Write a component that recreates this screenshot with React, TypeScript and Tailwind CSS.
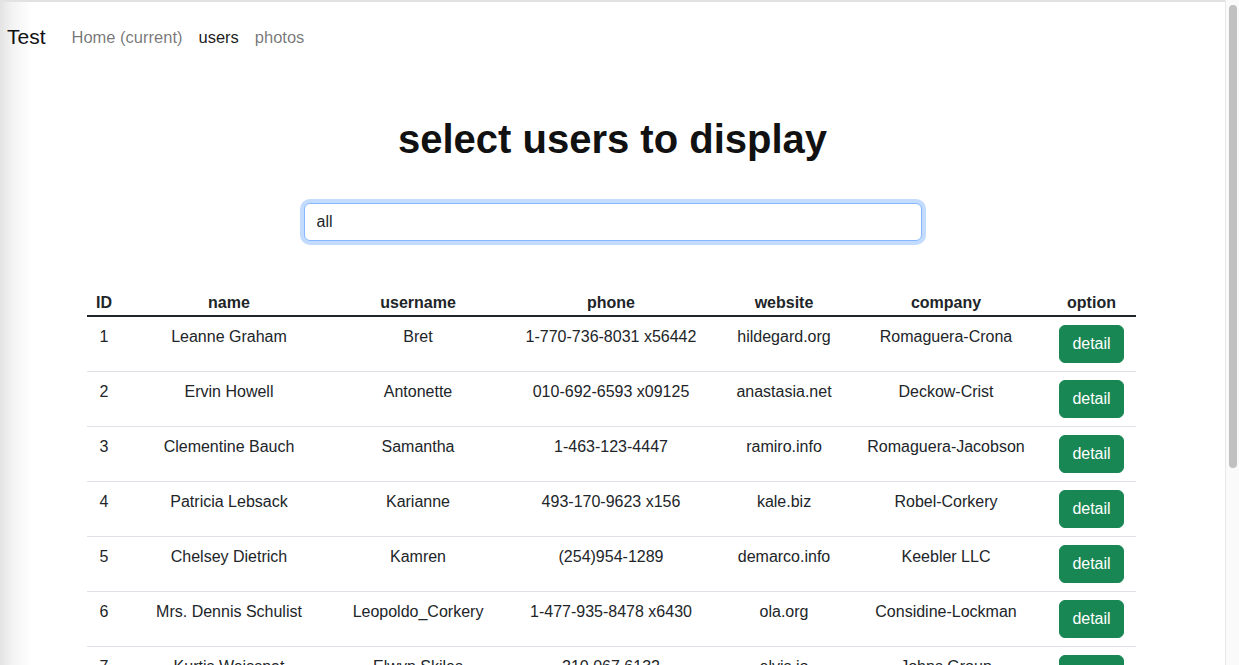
import React from "react";

type User = {
  id: number;
  name: string;
  username: string;
  phone: string;
  website: string;
  company: string;
};

const users: User[] = [
  { id: 1, name: "Leanne Graham", username: "Bret", phone: "1-770-736-8031 x56442", website: "hildegard.org", company: "Romaguera-Crona" },
  { id: 2, name: "Ervin Howell", username: "Antonette", phone: "010-692-6593 x09125", website: "anastasia.net", company: "Deckow-Crist" },
  { id: 3, name: "Clementine Bauch", username: "Samantha", phone: "1-463-123-4447", website: "ramiro.info", company: "Romaguera-Jacobson" },
  { id: 4, name: "Patricia Lebsack", username: "Karianne", phone: "493-170-9623 x156", website: "kale.biz", company: "Robel-Corkery" },
  { id: 5, name: "Chelsey Dietrich", username: "Kamren", phone: "(254)954-1289", website: "demarco.info", company: "Keebler LLC" },
  { id: 6, name: "Mrs. Dennis Schulist", username: "Leopoldo_Corkery", phone: "1-477-935-8478 x6430", website: "ola.org", company: "Considine-Lockman" },
  { id: 7, name: "Kurtis Weissnat", username: "Elwyn.Skiles", phone: "210.067.6132", website: "elvis.io", company: "Johns Group" },
  { id: 8, name: "Nicholas Runolfsdottir V", username: "Maxime_Nienow", phone: "586.493.6943 x140", website: "jacynthe.com", company: "Abernathy Group" },
  { id: 9, name: "Glenna Reichert", username: "Delphine", phone: "(775)976-6794 x41206", website: "conrad.com", company: "Yost and Sons" },
  { id: 10, name: "Clementina DuBuque", username: "Moriah.Stanton", phone: "024-648-3804", website: "ambrose.net", company: "Hoeger LLC" },
];

export default function App() {
  return (
    <div className="flex h-screen w-full overflow-hidden bg-white font-['Liberation_Sans',Arial,sans-serif] text-[#212529]">
      <div className="flex min-w-0 flex-1 flex-col border-t-2 border-[#e2e2e2] bg-[linear-gradient(to_right,#e3e3e3_0px,#f3f3f3_12px,#ffffff_32px)]">
        {/* navbar */}
        <nav className="flex h-[70px] shrink-0 items-center pl-[7px]">
          <span className="mr-[18px] text-[21px] leading-[30px] text-[#111]">Test</span>
          <a className="px-2 text-[16.5px] leading-6 text-[rgba(0,0,0,0.55)]">Home (current)</a>
          <a className="px-2 text-[16.5px] leading-6 text-[rgba(0,0,0,0.9)]">users</a>
          <a className="px-2 text-[16.5px] leading-6 text-[rgba(0,0,0,0.55)]">photos</a>
        </nav>

        <h1 className="mt-[43px] text-center text-[40px] font-bold leading-[48px] text-[#111]">select users to display</h1>

        <div className="mt-[40px] flex justify-center">
          <input
            readOnly
            value="all"
            className="h-[38px] w-[618px] rounded-[6px] border border-[#86b7fe] bg-white px-3 text-base leading-6 text-[#212529] shadow-[0_0_0_4px_rgba(13,110,253,0.25)] outline-none"
          />
        </div>

        <div className="mt-[42px] flex justify-center pr-[2px]">
          <table className="w-[1049px] table-fixed border-collapse text-base leading-6">
            <colgroup>
              <col className="w-[34px]" />
              <col className="w-[216px]" />
              <col className="w-[162px]" />
              <col className="w-[224px]" />
              <col className="w-[122px]" />
              <col className="w-[202px]" />
              <col className="w-[89px]" />
            </colgroup>
            <thead>
              <tr className="border-b-2 border-[#212529]">
                {["ID", "name", "username", "phone", "website", "company", "option"].map((h) => (
                  <th key={h} className="px-2 pb-0 pt-2 text-center align-top font-bold">
                    {h}
                  </th>
                ))}
              </tr>
            </thead>
            <tbody>
              {users.map((u) => (
                <tr key={u.id} className="border-b border-[#dee2e6]">
                  <td className="p-2 text-center align-top">{u.id}</td>
                  <td className="whitespace-nowrap p-2 text-center align-top">{u.name}</td>
                  <td className="whitespace-nowrap p-2 text-center align-top">{u.username}</td>
                  <td className="whitespace-nowrap p-2 text-center align-top">{u.phone}</td>
                  <td className="whitespace-nowrap p-2 text-center align-top">{u.website}</td>
                  <td className="whitespace-nowrap p-2 text-center align-top">{u.company}</td>
                  <td className="p-2 text-center align-top">
                    <button className="h-[38px] rounded-[6px] border border-[#198754] bg-[#198754] px-3 text-base leading-6 text-white">
                      detail
                    </button>
                  </td>
                </tr>
              ))}
            </tbody>
          </table>
        </div>
      </div>

      {/* scrollbar */}
      <div className="flex h-full w-[14px] shrink-0 justify-center border-l border-[#e8e8e8] bg-[#fafafa] pt-[5px]">
        <div className="h-[463px] w-[8px] rounded-full bg-[#c1c1c1]" />
      </div>
    </div>
  );
}
